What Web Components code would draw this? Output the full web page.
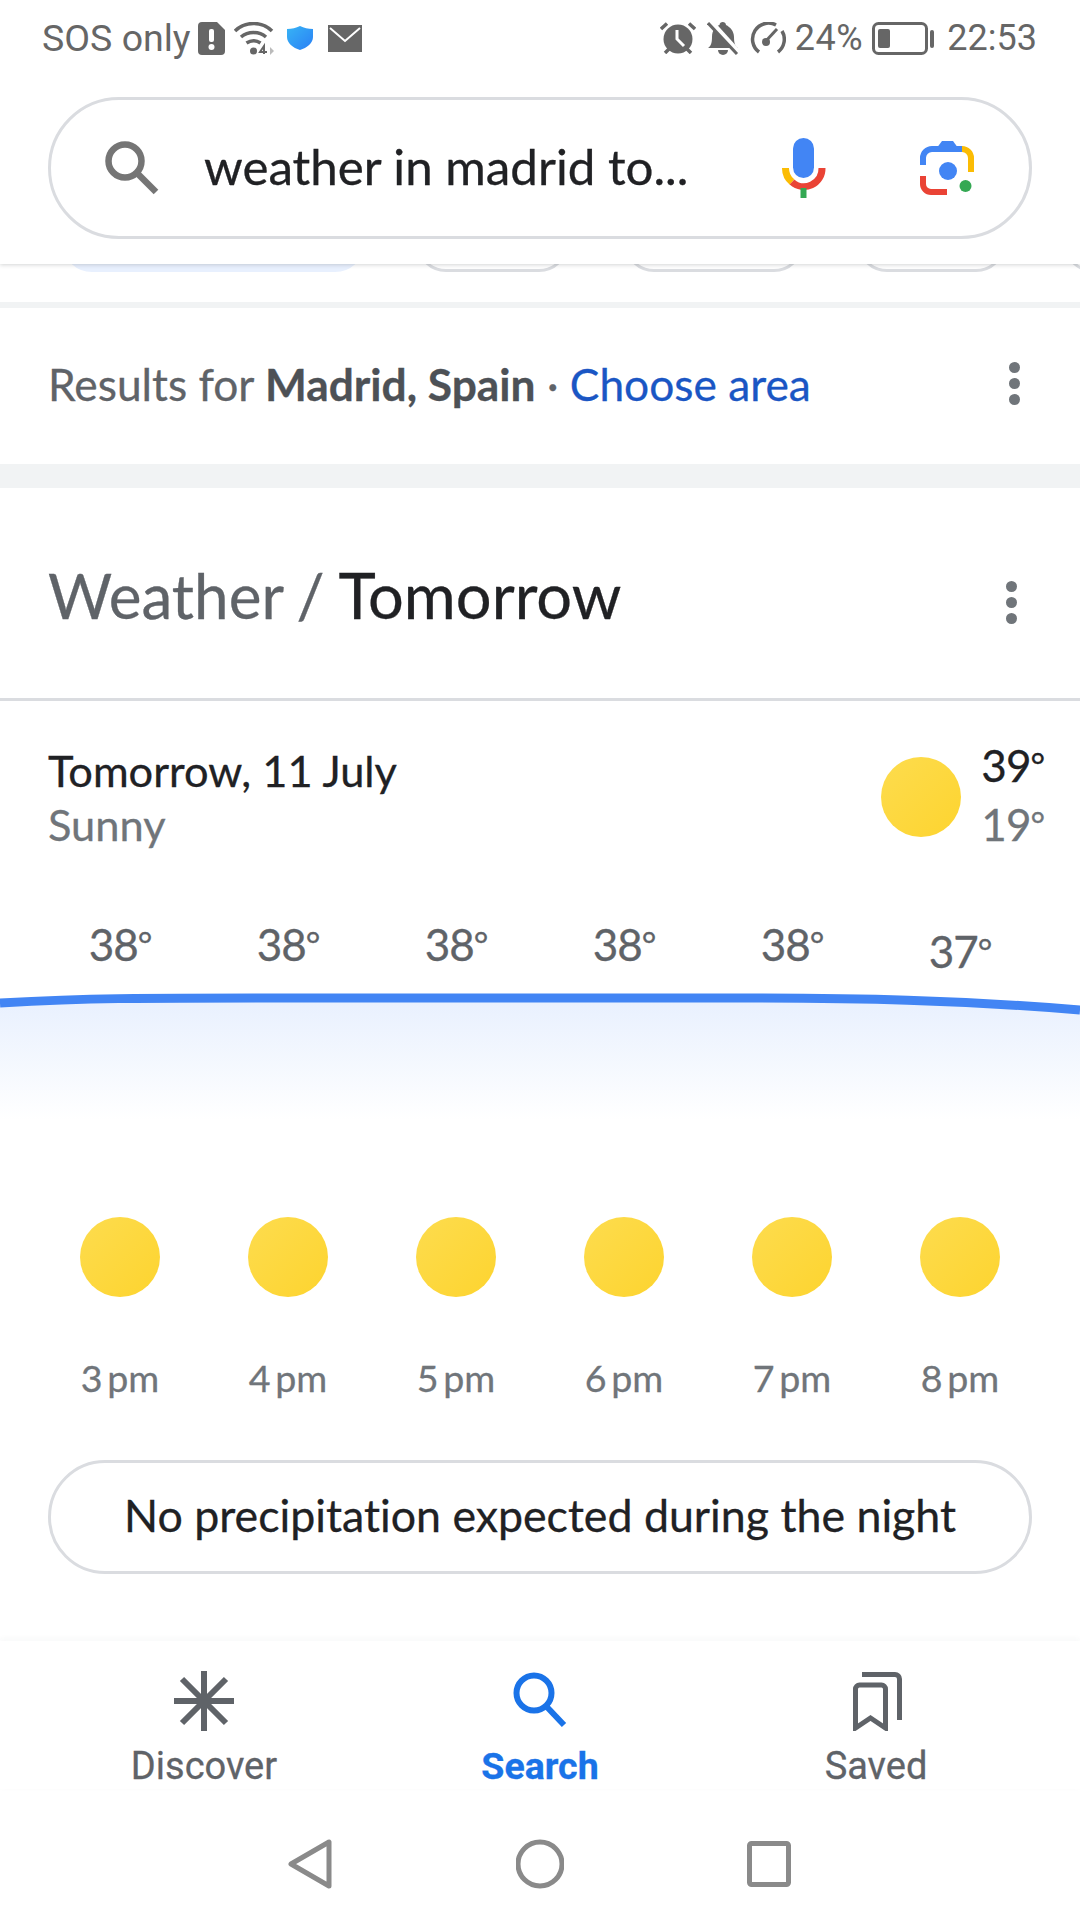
<!DOCTYPE html>
<html lang="en">
<head>
<meta charset="utf-8">
<title>weather in madrid tomorrow</title>
<style>
  html, body { margin: 0; background: #fff; }
  body {
    width: 1080px;
    height: 1920px;
    overflow: hidden;
    display: flex;
    flex-direction: column;
    font-family: Lato, "Liberation Sans", sans-serif;
    font-variant-ligatures: none;
    -webkit-text-stroke: 0.3px;
  }
  weather-card { flex: 1; }
</style>
</head>
<body>
  <top-header></top-header>
  <chip-strip></chip-strip>
  <location-row></location-row>
  <weather-card>No precipitation expected during the night</weather-card>
  <bottom-tabs>
    <nav-tab label="Discover">
      <svg width="60" height="60" viewBox="0 0 60 60" fill="none" stroke="#5f6368" stroke-width="6"><path d="M30 0V60M0 30H60M8 8L52 52M52 8L8 52"/></svg>
    </nav-tab>
    <nav-tab label="Search" active>
      <svg width="60" height="60" viewBox="0 0 60 60" fill="none" stroke="#1a73e8" stroke-width="6" style="transform:translateX(-2px)"><circle cx="26" cy="22" r="17.500"/><path d="M38 35L56 54"/></svg>
    </nav-tab>
    <nav-tab label="Saved">
      <svg width="60" height="60" viewBox="0 0 60 60" fill="none" stroke="#5f6368" stroke-width="5"><path d="M16 3.500H49a4.500 4.500 0 0 1 4.500 4.500V49"/><path d="M9.500 57V18a4 4 0 0 1 4-4H35.500a4 4 0 0 1 4 4V57L24.500 47Z"/></svg>
    </nav-tab>
  </bottom-tabs>
  <system-nav></system-nav>

<script>
class StatusBar extends HTMLElement {
  constructor() {
    super();
    this.attachShadow({ mode: "open" });
  }

  static get styles() {
    return /* css */`
      :host {
        display: flex;
        align-items: center;
        height: 76px;
        padding: 0 43px 0 42px;
        color: #666;
        font-family: Roboto, "Liberation Sans", sans-serif;
        font-size: 36px;
        -webkit-text-stroke: 0;
      }
      svg { display: block; flex: none; }
      .grow { flex: 1; }
      .sos { font-size: 37.500px; }
    `;
  }

  connectedCallback() {
    this.shadowRoot.innerHTML = /* html */`
    <style>${StatusBar.styles}</style>
    <span class="sos">SOS only</span>
    <svg style="margin-left:7px" width="27" height="33" viewBox="0 0 27 33"><path fill="#666" d="M4 0H19L27 8V29a4 4 0 0 1-4 4H4a4 4 0 0 1-4-4V4a4 4 0 0 1 4-4Z"/><rect x="11" y="7" width="5" height="13" rx="2" fill="#fff"/><circle cx="13.500" cy="25" r="3" fill="#fff"/></svg>
    <svg style="margin-left:9px" width="40" height="33" viewBox="0 0 40 33" fill="none" stroke="#666" stroke-width="3.500"><path d="M1 9C11 -1 28 -1 38 9"/><path d="M7 15C14 9 25 9 32 15"/><path d="M12.500 21C17 18 22 18 26.500 21"/><circle cx="19.500" cy="29" r="3.500" fill="#666" stroke="none"/><path d="M30 32V24L26 30H33" stroke-width="2"/><path d="M36 25L40 29L36 33Z" fill="#bbb" stroke="none"/></svg>
    <svg style="margin-left:13px" width="26" height="24" viewBox="0 0 26 24"><defs><linearGradient id="sh" x1="0" y1="0" x2="1" y2="1"><stop offset="0" stop-color="#37b4f5"/><stop offset="1" stop-color="#2a7ff5"/></linearGradient></defs><path fill="url(#sh)" d="M13 0C17 2 21 3 26 3V11C26 17 20 22 13 24C6 22 0 17 0 11V3C5 3 9 2 13 0Z"/></svg>
    <svg style="margin-left:15px" width="34" height="27" viewBox="0 0 34 27"><rect width="34" height="27" fill="#666"/><path d="M2 3L17 16L32 3" fill="none" stroke="#fff" stroke-width="2"/></svg>
    <span class="grow"></span>
    <svg width="36" height="32" viewBox="0 0 36 32"><circle cx="18" cy="17" r="14.500" fill="#666"/><path d="M17 8V17L24 24" fill="none" stroke="#fff" stroke-width="3"/><path d="M1 7L7 1.500M35 7L29 1.500M5 31L9 27M31 31L27 27" stroke="#666" stroke-width="3.500"/></svg>
    <svg style="margin-left:11px" width="32" height="33" viewBox="0 0 32 33"><path fill="#666" d="M1 26C4 24 5 21 5 15C5 8 9 4 12.500 3C12.500 -1 19 -1 19 3C23 5 27 9 27 15C27 21 28 24 31 26Z"/><path fill="#666" d="M11 28H21a5 5 0 0 1-10 0Z"/><path d="M3 -1L32 31" stroke="#fff" stroke-width="5.500"/><path d="M1 1L30 32" stroke="#666" stroke-width="3"/></svg>
    <svg style="margin-left:11px" width="36" height="32" viewBox="0 0 36 32" fill="none" stroke="#666" stroke-width="3.500"><path d="M9 30A16 16 0 0 1 26 3"/><path d="M32 9A16 16 0 0 1 28 30"/><path d="M15 20L27 7" stroke-width="3"/><circle cx="16" cy="20" r="4" fill="#666" stroke="none"/></svg>
    <span style="margin-left:9px;letter-spacing:.6px">24%</span>
    <svg style="margin-left:9px" width="62" height="33" viewBox="0 0 62 33"><rect x="1.500" y="1.500" width="53" height="30" rx="5" fill="none" stroke="#666" stroke-width="3"/><rect x="6" y="7" width="12" height="19" rx="2" fill="#666"/><rect x="58" y="8" width="4" height="18" rx="2" fill="#666"/></svg>
    <span style="margin-left:13px">22:53</span>`;
  }
}

class TopHeader extends HTMLElement {
  constructor() {
    super();
    this.attachShadow({ mode: "open" });
  }

  static get styles() {
    return /* css */`
      :host {
        display: block;
        height: 264px;
        background: #fff;
        position: relative;
        z-index: 2;
        box-shadow: 0 1px 4px rgba(60, 64, 67, 0.22);
      }
      .pill {
        display: flex;
        align-items: center;
        box-sizing: border-box;
        height: 142px;
        margin: 21px 48px 0;
        padding: 0 0 0 54px;
        border: 3px solid #dadce0;
        border-radius: 71px;
      }
      .query {
        margin-left: 45px;
        width: 520px;
        padding-bottom: 5px;
        font-size: 49.300px;
        color: #202124;
        white-space: nowrap;
      }
      svg { display: block; flex: none; }
    `;
  }

  connectedCallback() {
    this.shadowRoot.innerHTML = /* html */`
    <style>${TopHeader.styles}</style>
    <status-bar></status-bar>
    <div class="pill">
      <svg width="54" height="54" viewBox="0 0 54 54" fill="none" stroke="#757575" stroke-width="6.500"><circle cx="20" cy="20" r="16.500"/><path d="M32 32L51 51"/></svg>
      <span class="query">weather in madrid to...</span>
      <svg style="margin-left:58px" width="44" height="60" viewBox="0 0 44 60" fill="none" stroke-width="7"><rect x="11" y="0" width="21" height="40" rx="10.500" fill="#4285f4"/><path d="M3.500 30A18 18 0 0 0 10 44" stroke="#fbbc04"/><path d="M10 44A18 18 0 0 0 40 30" stroke="#ea4335"/><path d="M21.500 50V60" stroke="#34a853" stroke-width="6"/></svg>
      <svg style="margin-left:94px" width="54" height="54" viewBox="0 0 54 54" fill="none" stroke-width="6"><path d="M3 24V17A9 9 0 0 1 12 8H42" stroke="#4285f4"/><path d="M16 8L22 0H33L41 11H16Z" fill="#4285f4"/><path d="M42 8A9 9 0 0 1 51 17V31" stroke="#fbbc04"/><path d="M3 35V43A8 8 0 0 0 11 51H27" stroke="#ea4335"/><circle cx="28" cy="30" r="9" fill="#4285f4"/><circle cx="45.500" cy="45" r="6" fill="#34a853"/></svg>
    </div>`;
  }
}

class ChipStrip extends HTMLElement {
  constructor() {
    super();
    this.attachShadow({ mode: "open" });
  }

  static get styles() {
    return /* css */`
      :host { display: block; height: 38px; background: #fff; }
      .row {
        display: flex;
        align-items: flex-end;
        height: 8px;
        overflow: hidden;
        padding-left: 62px;
      }
      .row span {
        flex: none;
        box-sizing: border-box;
        height: 60px;
        border: 3px solid #dadce0;
        border-radius: 30px;
      }
      .row .on { background: #e8f0fe; border-color: #e8f0fe; }
    `;
  }

  connectedCallback() {
    this.shadowRoot.innerHTML = /* html */`
    <style>${ChipStrip.styles}</style>
    <div class="row">
      <span class="on" style="width:303px"></span>
      <span style="width:153px;margin-left:51px"></span>
      <span style="width:180px;margin-left:55px"></span>
      <span style="width:149px;margin-left:53px"></span>
      <span style="width:149px;margin-left:57px"></span>
    </div>`;
  }
}

class LocationRow extends HTMLElement {
  constructor() {
    super();
    this.attachShadow({ mode: "open" });
  }

  static get styles() {
    return /* css */`
      :host {
        display: flex;
        align-items: center;
        box-sizing: border-box;
        height: 186px;
        padding: 0 60px 5px 48px;
        background: #fff;
        border-top: 6px solid #f1f3f4;
        border-bottom: 24px solid #f1f3f4;
        font-size: 44.300px;
        color: #5f6368;
      }
      .text { flex: 1; white-space: nowrap; }
      b { color: #4d5156; }
      a { color: #1a56c4; text-decoration: none; }
    `;
  }

  connectedCallback() {
    this.shadowRoot.innerHTML = /* html */`
    <style>${LocationRow.styles}</style>
    <span class="text">Results for <b>Madrid, Spain</b> · <a>Choose area</a></span>
    <more-dots></more-dots>`;
  }
}

class MoreDots extends HTMLElement {
  constructor() {
    super();
    this.attachShadow({ mode: "open" });
  }

  static get styles() {
    return /* css */`
      :host {
        display: flex;
        flex-direction: column;
        gap: 5px;
      }
      i { width: 11px; height: 11px; border-radius: 50%; background: #70757a; }
    `;
  }

  connectedCallback() {
    this.shadowRoot.innerHTML = `<style>${MoreDots.styles}</style><i></i><i></i><i></i>`;
  }
}

class WeatherCard extends HTMLElement {
  constructor() {
    super();
    this.attachShadow({ mode: "open" });
  }

  static get styles() {
    return /* css */`
      :host { display: block; background: #fff; }
      .title {
        display: flex;
        align-items: center;
        height: 210px;
        padding: 0 63px 0 48px;
        border-bottom: 3px solid #dadce0;
        font-size: 62px;
        word-spacing: -2px;
        color: #5f6368;
      }
      .title span { flex: 1; padding-top: 3px; }
      .title b { font-weight: 400; font-size: 63.200px; color: #202124; }
      .title more-dots { margin-top: 18px; }
      .day {
        display: flex;
        align-items: center;
        height: 104px;
        padding: 44px 36px 0 48px;
      }
      .when { flex: 1; font-size: 43.400px; line-height: 54px; color: #202124; }
      .when div + div { color: #70757a; }
      .range { margin-left: 20px; padding-bottom: 7px; font-size: 44px; line-height: 58px; color: #202124; letter-spacing: -1px; }
      .range div + div { color: #70757a; }
      .grid {
        display: grid;
        grid-template-columns: repeat(6, 168px);
        justify-items: center;
        padding: 0 36px;
      }
      .deg { font-size: 0.8em; vertical-align: 0.1em; }
      .temps {
        margin-top: 69px;
        padding-bottom: 1px;
        font-size: 44px;
        line-height: 50px;
        letter-spacing: -1px;
        color: #5f6368;
      }
      svg.chart { display: block; }
      .suns { margin-top: 77px; }
      .hours {
        margin-top: 56px;
        font-size: 37.600px;
        line-height: 50px;
        color: #70757a;
      }
      .pill {
        display: flex;
        align-items: center;
        justify-content: center;
        box-sizing: border-box;
        height: 114px;
        margin: 57px 48px 0;
        padding-bottom: 4px;
        border: 3px solid #dadce0;
        border-radius: 57px;
        font-size: 44.700px;
        color: #202124;
      }
    `;
  }

  connectedCallback() {
    const temps = [38, 38, 38, 38, 38, 37];
    const hours = ["3", "4", "5", "6", "7", "8"];
    const deg = '<span class="deg">°</span>';
    this.shadowRoot.innerHTML = /* html */`
    <style>${WeatherCard.styles}</style>
    <div class="title">
      <span>Weather / <b>Tomorrow</b></span>
      <more-dots></more-dots>
    </div>
    <div class="day">
      <div class="when"><div>Tomorrow, 11 July</div><div>Sunny</div></div>
      <sun-icon></sun-icon>
      <div class="range"><div>39${deg}</div><div>19${deg}</div></div>
    </div>
    <div class="grid temps">
      ${temps.map(t => `<span${t < 38 ? ' style="padding-top:7px;margin-bottom:-7px"' : ""}>${t}${deg}</span>`).join("")}
    </div>
    <svg class="chart" width="1080" height="170" viewBox="0 0 1080 170">
      <defs><linearGradient id="fade" x1="0" y1="0" x2="0" y2="1"><stop offset="0" stop-color="#e8f0fe"/><stop offset="1" stop-color="#fff"/></linearGradient></defs>
      <path fill="url(#fade)" d="M0 32C90 28 130 28 288 28H720C860 28 960 30 1080 40V150H0Z"/>
      <path fill="none" stroke="#4285f4" stroke-width="9" d="M0 33C90 28 130 28 288 28H720C860 28 960 30 1080 40"/>
    </svg>
    <div class="grid suns">
      ${hours.map(() => "<sun-icon></sun-icon>").join("")}
    </div>
    <div class="grid hours">
      ${hours.map(h => `<span>${h}\u2009pm</span>`).join("")}
    </div>
    <div class="pill"><slot></slot></div>`;
  }
}

class SunIcon extends HTMLElement {
  constructor() {
    super();
    this.attachShadow({ mode: "open" });
  }

  connectedCallback() {
    this.shadowRoot.innerHTML = /* html */`
    <style>
      :host { display: block; width: 80px; height: 80px; flex: none; }
      div { width: 80px; height: 80px; border-radius: 50%; background: linear-gradient(135deg, #fddc4e, #fdd42f); }
    </style>
    <div></div>`;
  }
}

class BottomTabs extends HTMLElement {
  constructor() {
    super();
    this.attachShadow({ mode: "open" });
  }

  connectedCallback() {
    this.shadowRoot.innerHTML = /* html */`
    <style>
      :host {
        display: grid;
        grid-template-columns: repeat(3, 336px);
        box-sizing: border-box;
        height: 148px;
        padding: 30px 36px 0;
        background: #fff;
        position: relative;
        box-shadow: 0 -2px 6px rgba(60, 64, 67, 0.04);
      }
    </style>
    <slot></slot>`;
  }
}

class NavTab extends HTMLElement {
  constructor() {
    super();
    this.attachShadow({ mode: "open" });
  }

  connectedCallback() {
    const active = this.hasAttribute("active");
    this.shadowRoot.innerHTML = /* html */`
    <style>
      :host {
        display: flex;
        flex-direction: column;
        align-items: center;
        gap: 12px;
        font-family: Roboto, "Liberation Sans", sans-serif;
        font-size: ${active ? 37.5 : 38}px;
        line-height: 46px;
        font-weight: ${active ? 700 : 400};
        color: ${active ? "#1a73e8" : "#5f6368"};
      }
      ::slotted(svg) { display: block; }
    </style>
    <slot></slot>
    <span>${this.getAttribute("label")}</span>`;
  }
}

class SystemNav extends HTMLElement {
  constructor() {
    super();
    this.attachShadow({ mode: "open" });
  }

  connectedCallback() {
    this.shadowRoot.innerHTML = /* html */`
    <style>
      :host {
        display: flex;
        justify-content: center;
        align-items: center;
        height: 131px;
        box-sizing: border-box;
        padding: 50px 2px 31px 0;
        background: #fff;
      }
      svg { display: block; flex: none; }
    </style>
    <svg width="44" height="50" viewBox="0 0 44 50" fill="none" stroke="#8a8a8a" stroke-width="5" stroke-linejoin="round"><path d="M41 3V47L3 25Z"/></svg>
    <svg style="margin-left:184px" width="48" height="50" viewBox="0 0 48 50" fill="none" stroke="#8a8a8a" stroke-width="5"><circle cx="24" cy="25" r="22"/></svg>
    <svg style="margin-left:183px" width="44" height="46" viewBox="0 0 44 46" fill="none" stroke="#8a8a8a" stroke-width="5"><rect x="2.500" y="2.500" width="39" height="41" rx="2"/></svg>`;
  }
}

customElements.define("status-bar", StatusBar);
customElements.define("top-header", TopHeader);
customElements.define("chip-strip", ChipStrip);
customElements.define("location-row", LocationRow);
customElements.define("more-dots", MoreDots);
customElements.define("weather-card", WeatherCard);
customElements.define("sun-icon", SunIcon);
customElements.define("bottom-tabs", BottomTabs);
customElements.define("nav-tab", NavTab);
customElements.define("system-nav", SystemNav);
</script>
</body>
</html>
